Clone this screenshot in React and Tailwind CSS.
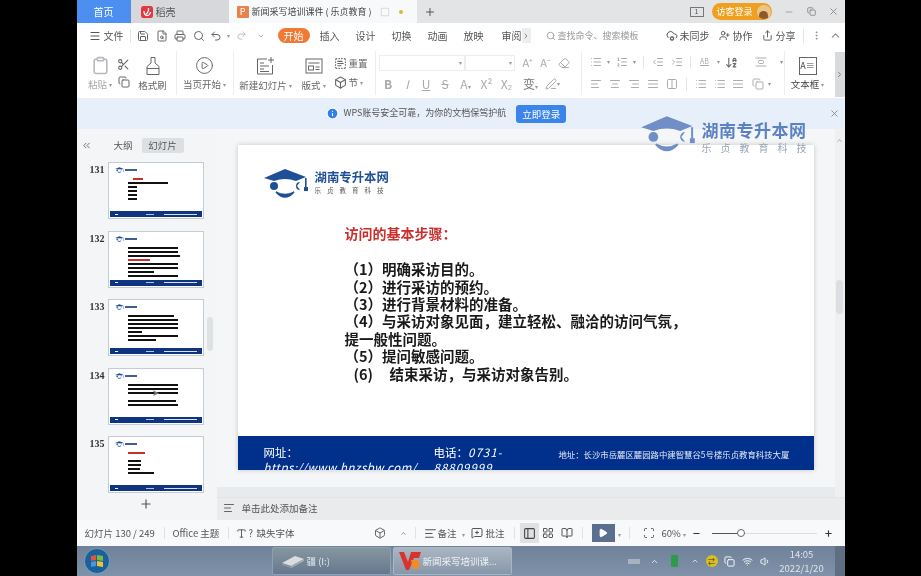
import React from "react";
import {
  Menu, Save, Printer, FileSearch, Undo2, Redo2, ChevronDown, ChevronRight, ChevronUp, Search, CloudCog, UserPlus, Share, MoreVertical, Clipboard, Scissors, Copy, X, Minus, Plus, List, ListOrdered, IndentDecrease, IndentIncrease, AlignLeft, AlignCenter, AlignRight, AlignJustify, Columns2, ArrowDownAZ, ChevronsLeft, Eraser, PenLine, BookOpen, LayoutGrid, PanelLeft, Play, Scan, Box, MessageSquarePlus, Info, Wifi, Volume1, SquareDashed, AlignVerticalSpaceAround, TextSelect, Type, CirclePlay,
} from "lucide-react";

const Caret = ({ c = "text-[#999]" }) => <span className={`inline-block text-[6px] leading-none ${c}`}>▾</span>;

const Logo = ({ fill = "#1f4f96", w = 46 }) => (
  <svg width={w} height={w * 0.72} viewBox="0 0 46 33">
    <path d="M1 10 L22 1 L43 9 L33 13 Q22 9 11 13 Z" fill={fill} />
    <circle cx="11" cy="18" r="4" fill={fill} />
    <path d="M37 14 A4 4 0 1 0 37 22 L34 18 Z" fill={fill} />
    <rect x="42" y="10" width="1.6" height="9" fill={fill} />
    <rect x="41" y="19" width="4" height="4" fill={fill} />
    <path d="M13 24 Q22 34 31 24 Q22 29 13 24 Z" fill={fill} stroke={fill} strokeWidth="1.5" />
  </svg>
);

const BrushIcon = () => (
  <svg width="20" height="20" viewBox="0 0 20 20" fill="none" stroke="#666" strokeWidth="1">
    <path d="M8 1.5 H12 V7 L16 10.5 V18.5 H4 V10.5 L8 7 Z" />
    <path d="M4 12.5 H16" />
  </svg>
);

const NewSlideIcon = () => (
  <svg width="20" height="20" viewBox="0 0 20 20" fill="none" stroke="#666" strokeWidth="1">
    <path d="M11 3 H1.5 V18 H16.5 V9" />
    <path d="M15 1 V7 M12 4 H18" />
    <path d="M4 7 H8 M4 10 H13 M4 13 H8 M4 15.5 H13" />
  </svg>
);

const LayoutIcon = () => (
  <svg width="20" height="20" viewBox="0 0 20 20" fill="none" stroke="#666" strokeWidth="1">
    <rect x="2" y="3" width="16" height="14" />
    <path d="M4.5 7 H15.5" />
    <rect x="4.5" y="10" width="5" height="4" />
    <path d="M11.5 11 H15.5 M11.5 13.5 H15.5" />
  </svg>
);

const SEP = () => <div className="h-[44px] w-px shrink-0 bg-[#eceef0]" />;

const Thumb = ({ n, lines, cursor }) => (
  <div className="flex h-[57px] items-start">
    <div className="w-[31px] pr-[3px] pt-[3px] text-right font-['Liberation_Serif',serif] text-[10px] font-bold leading-none text-[#333]">{n}</div>
    <div className="relative flex h-[57px] w-[96px] flex-col border border-[#c3ccd6] bg-white p-[1px]">
      <div className="flex items-center gap-[1px] pl-[5px] pt-[3px]">
        <Logo w={9} />
        <div className="h-[2px] w-[12px] bg-[#3c5f96]" />
      </div>
      <div className="mt-[5px] flex flex-col gap-[2px] pl-[18px]">
        {lines.map((l, i) => (
          <div key={i} className="h-[2px]" style={{ width: l[0], marginLeft: l[1] || 0, background: l[2] || "#111" }} />
        ))}
      </div>
      {cursor && <div className="absolute left-[43px] top-[19px] text-[9px] leading-none text-[#777]">➤</div>}
      <div className="mt-auto flex h-[6px] items-center gap-[6px] bg-[#0f3480] px-[5px]">
        <div className="h-px w-[4px] bg-white" />
        <div className="ml-[22px] h-px w-[10px] bg-[#b9c6e0]" />
        <div className="ml-[4px] h-px w-[38px] bg-[#d9e0ef]" />
      </div>
    </div>
  </div>
);

const RED = "#c9302c";
const thumbs = [
  [131, [[10, 5, RED], [40], [9, 0], [9, 0], [9, 0], [9, 0]]],
  [132, [[50, 0], [50, 0], [52, 0], [22, 0, RED], [50, 0], [50, 0], [26, 0], [50, 0]]],
  [133, [[46, 0], [50, 0], [50, 0], [50, 0], [14, 0], [50, 0], [28, 0]]],
  [134, [[50, 0], [50, 0], [50, 0], [0, 0], [48, 0], [50, 0]], true],
  [135, [[17, 0, RED], [0], [13, 0], [13, 0], [12, 0], [26, 0]]],
];

const Label = ({ children, className = "" }) => <div className={`flex items-center justify-center gap-[2px] whitespace-nowrap text-[9.5px] leading-none ${className}`}>{children}</div>;

const Cell = ({ w, children }) => <div className={`flex shrink-0 items-center justify-center text-[#a9adb2] ${w}`}>{children}</div>;

export default function App() {
  return (
    <div className="flex h-[576px] w-[921px] justify-center overflow-hidden bg-black font-['Noto_Sans_CJK_SC','Liberation_Sans',sans-serif] blur-[0.3px]">
      <div className="relative flex h-full w-[768px] flex-col">
        {/* tab bar */}
        <div className="flex h-[23px] shrink-0 items-center bg-[#e2e4e6]">
          <div className="flex h-full w-[54px] items-center justify-center bg-[#4d8ff0] text-[10px] text-white">首页</div>
          <div className="flex h-full w-[98px] items-center gap-[3px] bg-[#d6d8db] pl-[10px] text-[10px] text-[#555]">
            <svg width="12" height="12" viewBox="0 0 12 12">
              <rect width="12" height="12" rx="2.5" fill="#e2383f" />
              <path d="M7.5 2 Q8 6 5 8 M3 5 Q3 9.5 6 9.5 Q9 9.5 9.5 6" fill="none" stroke="white" strokeWidth="1.3" />
            </svg>
            稻壳
          </div>
          <div className="flex h-full w-[188px] items-center bg-[#f8f9fa] pl-[8px] text-[#444]">
            <div className="flex h-[12px] w-[12px] items-center justify-center rounded-[1px] bg-[#e8834c] text-[9px] leading-none text-white">P</div>
            <span className="ml-[3px] whitespace-nowrap text-[9px]">新闻采写培训课件 ( 乐贞教育 )</span>
            <SquareDashed size={10} className="ml-[8px] text-[#bbb]" />
            <div className="ml-[9px] h-[4px] w-[4px] rounded-full bg-[#e8b33a]" />
          </div>
          <Plus size={12} className="ml-[7px] text-[#555]" />
          <div className="ml-[254px] flex h-[10px] w-[14px] items-center justify-center border border-[#777] text-[7px] leading-none text-[#555]">1</div>
          <div className="ml-[8px] flex h-[17px] w-[60px] items-center justify-between rounded-full bg-[#f0a020] pl-[5px] pr-[1px] text-[9px] text-white">
            访客登录
            <div className="flex h-[14px] w-[14px] items-end justify-center overflow-hidden rounded-full bg-[#e8c68a]"><div className="h-[8px] w-[9px] rounded-t-full bg-[#8a5a2a]" /></div>
          </div>
          <Minus size={10} className="ml-[12px] text-[#999]" />
          <Copy size={9} className="ml-[13px] text-[#777]" />
          <X size={11} className="ml-[12px] text-[#888]" />
        </div>

        {/* quick bar + menu */}
        <div className="flex h-[25px] shrink-0 items-center whitespace-nowrap bg-white pl-[12px] text-[10px] text-[#555]">
          <Menu size={12} className="shrink-0 text-[#555]" />
          <span className="ml-[3px] w-[22px] shrink-0">文件</span>
          <div className="ml-[4px] h-[14px] w-px bg-[#e5e5e5]" />
          <div className="ml-[3px] flex items-center text-[#666]">
            <Cell w="w-[19px]"><Save size={12} className="text-[#666]" /></Cell>
            <Cell w="w-[18px]"><FileSearch size={12} className="text-[#666]" /></Cell>
            <Cell w="w-[19px]"><Printer size={12} className="text-[#666]" /></Cell>
            <Cell w="w-[18px]"><Search size={12} className="text-[#666]" /></Cell>
            <Cell w="w-[17px]"><Undo2 size={12} className="text-[#666]" /></Cell>
            <Cell w="w-[8px]"><Caret /></Cell>
            <Cell w="w-[18px]"><Redo2 size={11} className="text-[#bbb]" /></Cell>
            <Cell w="w-[20px]"><ChevronDown size={8} className="text-[#888]" /></Cell>
          </div>
          <div className="ml-[7px] flex h-[15px] w-[32px] shrink-0 items-center justify-center rounded-full bg-[#ee7a35] text-white">开始</div>
          <div className="ml-[2px] w-[36px] shrink-0 text-center">插入</div>
          <div className="w-[36px] shrink-0 text-center">设计</div>
          <div className="w-[36px] shrink-0 text-center">切换</div>
          <div className="w-[36px] shrink-0 text-center">动画</div>
          <div className="w-[36px] shrink-0 text-center">放映</div>
          <div className="w-[30px] shrink-0 text-right">审阅</div>
          <div className="flex h-[15px] w-[9px] shrink-0 items-center justify-center bg-[#eceef0]"><ChevronRight size={8} /></div>
          <Search size={10} className="ml-[15px] shrink-0 text-[#999]" />
          <span className="ml-[2px] shrink-0 text-[9px] text-[#999]">查找命令、搜索模板</span>
          <CloudCog size={12} className="ml-[27px] shrink-0" />
          <span className="ml-[2px] shrink-0">未同步</span>
          <UserPlus size={11} className="ml-[9px] shrink-0" />
          <span className="ml-[3px] shrink-0">协作</span>
          <Share size={11} className="ml-[9px] shrink-0" />
          <span className="ml-[3px] shrink-0">分享</span>
          <div className="ml-[7px] h-[14px] w-px shrink-0 bg-[#e5e5e5]" />
          <MoreVertical size={11} className="ml-[7px] shrink-0 text-[#888]" />
          <ChevronUp size={13} className="ml-[7px] shrink-0 text-[#888]" />
        </div>

        {/* ribbon */}
        <div className="relative flex h-[50px] shrink-0 items-center bg-white pl-[10px] text-[#666]">
          <div className="flex w-[27px] flex-col items-center gap-[5px]">
            <Clipboard size={19} className="text-[#b5b8bc]" />
            <Label className="text-[#aaa]">粘贴<Caret /></Label>
          </div>
          <div className="flex w-[20px] flex-col items-center gap-[5px]">
            <Scissors size={13} className="text-[#666]" />
            <Copy size={12} className="text-[#666]" />
          </div>
          <div className="flex w-[38px] flex-col items-center gap-[5px]">
            <BrushIcon />
            <Label>格式刷</Label>
          </div>
          <div className="ml-[4px]"><SEP /></div>
          <div className="flex w-[56px] flex-col items-center gap-[5px]">
            <CirclePlay size={19} strokeWidth={1.25} className="text-[#666]" />
            <Label>当页开始<Caret /></Label>
          </div>
          <SEP />
          <div className="flex w-[64px] flex-col items-center gap-[5px]">
            <NewSlideIcon />
            <Label>新建幻灯片<Caret /></Label>
          </div>
          <div className="flex w-[32px] flex-col items-center gap-[5px]">
            <LayoutIcon />
            <Label>版式<Caret /></Label>
          </div>
          <div className="ml-[4px] flex w-[38px] flex-col gap-[6px]">
            <Label className="justify-start"><TextSelect size={13} className="text-[#666]" />重置</Label>
            <Label className="justify-start"><Box size={13} className="text-[#666]" />节<Caret /></Label>
          </div>
          <div className="ml-[3px]"><SEP /></div>
          <div className="ml-[3px] flex w-[202px] flex-col gap-[5px]">
            <div className="flex h-[16px] items-center">
              <div className="flex h-[16px] w-[86px] items-center justify-end border border-[#eee] pr-[2px]"><Caret /></div>
              <div className="flex h-[16px] w-[50px] items-center justify-end border border-[#eee] pr-[2px]"><Caret /></div>
              <div className="ml-[8px] flex items-center gap-[7px] text-[11px] leading-none text-[#aaa]">
                <span>A⁺</span><span>A⁻</span><Eraser size={12} className="text-[#aaa]" />
              </div>
            </div>
            <div className="flex h-[16px] items-center text-[12px] leading-none text-[#aaa]">
              <span className="w-[19px] text-center font-bold">B</span>
              <span className="w-[19px] text-center italic">I</span>
              <span className="w-[19px] text-center underline">U</span>
              <span className="w-[19px] text-center line-through">S</span>
              <span className="w-[22px] text-center">A<Caret /></span>
              <span className="w-[20px] text-center">X²</span>
              <span className="w-[20px] text-center">X₂</span>
              <span className="w-[28px] text-center text-[#777]">变<Caret /></span>
              <PenLine size={12} className="text-[#aaa]" /><Caret />
            </div>
          </div>
          <div className="flex h-[44px] w-px bg-[#eceef0]" />
          <div className="ml-[4px] flex w-[198px] flex-col gap-[6px]">
            <div className="flex h-[16px] items-center">
              <Cell w="w-[20px]"><List size={12} /></Cell><Cell w="w-[6px]"><Caret /></Cell>
              <Cell w="w-[20px]"><ListOrdered size={12} /></Cell><Cell w="w-[6px]"><Caret /></Cell>
              <div className="mx-[5px] h-[13px] w-px bg-[#e5e5e5]" />
              <Cell w="w-[19px]"><IndentDecrease size={12} /></Cell>
              <Cell w="w-[19px]"><IndentIncrease size={12} /></Cell>
              <div className="mx-[3px] h-[13px] w-px bg-[#e5e5e5]" />
              <Cell w="w-[22px]"><span className="border-b border-[#aaa] text-[7px] leading-none">AB</span></Cell><Cell w="w-[6px]"><Caret /></Cell>
              <Cell w="w-[20px]"><ArrowDownAZ size={13} className="text-[#666]" /></Cell>
              <Cell w="w-[38px]"><AlignVerticalSpaceAround size={12} /></Cell><Caret />
            </div>
            <div className="flex h-[16px] items-center">
              <Cell w="w-[20px]"><AlignLeft size={12} /></Cell>
              <Cell w="w-[19px]"><AlignCenter size={12} /></Cell>
              <Cell w="w-[19px]"><AlignRight size={12} /></Cell>
              <Cell w="w-[19px]"><AlignJustify size={12} /></Cell>
              <Cell w="w-[19px]"><Columns2 size={12} /></Cell>
              <div className="mx-[4px] h-[13px] w-px bg-[#e5e5e5]" />
              <Cell w="w-[20px]"><List size={12} /></Cell>
              <Cell w="w-[18px]"><List size={12} /></Cell>
              <Cell w="w-[19px]"><AlignJustify size={12} /></Cell>
              <Cell w="w-[20px]"><Copy size={12} /></Cell><Caret />
            </div>
          </div>
          <div className="flex h-[44px] w-px bg-[#eceef0]" />
          <div className="flex w-[46px] flex-col items-center gap-[5px]">
            <div className="flex h-[18px] w-[18px] items-center justify-center border border-[#666] text-[9px] leading-none text-[#444]">A≡</div>
            <Label className="text-[#444]">文本框<Caret /></Label>
          </div>
          <div className="absolute right-0 top-[4px] flex h-[45px] w-[10px] items-center justify-center bg-[#d8dadc]"><ChevronRight size={9} /></div>
        </div>

        {/* notice */}
        <div className="relative flex h-[31px] shrink-0 items-start bg-[#e7f0fa] pt-[7px] pl-[249px]">
          <Info size={13} fill="#2f80e8" className="mt-[2px] text-white" />
          <span className="ml-[5px] mt-[1px] whitespace-nowrap text-[9px] leading-[14px] text-[#555]">WPS账号安全可靠，为你的文档保驾护航</span>
          <div className="ml-[10px] flex h-[18px] w-[50px] items-center justify-center rounded-[3px] bg-[#3a84ea] text-[9.5px] text-white">立即登录</div>
          <X size={11} className="absolute right-[5px] top-[10px] text-[#888]" />
        </div>

        {/* work area */}
        <div className="flex min-h-0 flex-1">
          <div className="flex w-[140px] shrink-0 flex-col bg-[#f3f5f6]">
            <div className="flex h-[33px] shrink-0 items-center text-[9.5px] text-[#555]">
              <ChevronsLeft size={11} className="ml-[4px] text-[#666]" />
              <span className="ml-[22px]">大纲</span>
              <div className="ml-[9px] flex h-[15px] w-[42px] items-center justify-center rounded-[2px] bg-[#dde0e3]">幻灯片</div>
            </div>
            <div className="relative flex flex-col gap-[11.5px]">
              {thumbs.map(([n, l, c]) => <Thumb key={n} n={n} lines={l} cursor={c} />)}
              <div className="absolute left-[130px] top-[155px] h-[34px] w-[6px] rounded-full bg-[#dfe2e5]" />
            </div>
            <div className="mt-[4px] flex justify-center pr-[1px]"><Plus size={14} className="text-[#555]" /></div>
          </div>

          <div className="relative flex min-w-0 flex-1 flex-col bg-[#f4f6f7]">
            <div className="flex flex-1 flex-col">
              <div className="ml-[21px] mt-[16px] flex h-[325px] w-[576px] flex-col bg-white shadow-[0_0_5px_rgba(0,0,0,0.2)]">
                <div className="flex items-center gap-[6px] pl-[25px] pt-[23px]">
                  <Logo w={46} />
                  <div className="-mt-[4px]">
                    <div className="whitespace-nowrap text-[12.4px] font-bold leading-[14px] text-[#1f4f96]">湖南专升本网</div>
                    <div className="whitespace-nowrap text-[6.5px] leading-[12px] tracking-[6px] text-[#555]">乐贞教育科技</div>
                  </div>
                </div>
                <div className="ml-[107px] mt-[22px] text-[14px] font-bold leading-[20px] text-[#c9302c]">访问的基本步骤：</div>
                <div className="ml-[107px] mt-[17px] w-[345px] text-[14.5px] font-bold leading-[17.4px] text-[#1a1a1a]">
                  <div>（1）明确采访目的。</div>
                  <div>（2）进行采访的预约。</div>
                  <div>（3）进行背景材料的准备。</div>
                  <div>（4）与采访对象见面，建立轻松、融洽的访问气氛，</div>
                  <div>提一般性问题。</div>
                  <div>（5）提问敏感问题。</div>
                  <div className="pl-[9px]">(6)&nbsp;&nbsp;&nbsp;&nbsp;&nbsp;结束采访，与采访对象告别。</div>
                </div>
                <div className="mt-auto flex h-[34px] shrink-0 overflow-hidden bg-[#00308c] pl-[26px] text-white">
                  <div className="w-[170px] pt-[9px] text-[11.5px] leading-[15px]">
                    <div>网址：</div>
                    <div className="whitespace-nowrap italic tracking-[0.5px]">https://www.hnzsbw.com/</div>
                  </div>
                  <div className="w-[125px] pt-[9px] text-[11.5px] leading-[15px]">
                    <div>电话：<span className="italic tracking-[1px]">0731-</span></div>
                    <div className="italic tracking-[1px]">88809999</div>
                  </div>
                  <div className="whitespace-nowrap pt-[12px] text-[8.4px] leading-[12px] text-[#e6ebf6]">地址：长沙市岳麓区麓园路中建智慧谷5号楼乐贞教育科技大厦</div>
                </div>
              </div>
              <div className="mt-[17px] h-[10px] bg-[#e8ebed]" />
            </div>
            <div className="flex h-[23px] shrink-0 items-center border-t border-[#e2e4e6] bg-[#e9ebec] pb-[2px] pl-[6px] text-[9.5px] text-[#555]">
              <AlignLeft size={12} className="text-[#666]" />
              <span className="ml-[7px]">单击此处添加备注</span>
            </div>
            <div className="absolute bottom-[23px] right-0 top-0 flex w-[10px] flex-col items-center bg-[#eef0f2] pt-[8px]">
              <ChevronUp size={7} className="text-[#777]" />
              <div className="mt-[136px] h-[34px] w-[7px] rounded-full bg-[#dcdfe2]" />
            </div>
          </div>
        </div>

        {/* status bar */}
        <div className="flex h-[26px] shrink-0 items-center bg-[#f8f9fa] pl-[8px] text-[9.5px] text-[#555]">
          <span className="w-[79px] whitespace-nowrap">幻灯片 130 / 249</span>
          <div className="h-[12px] w-px bg-[#e2e2e2]" />
          <span className="ml-[8px] w-[55px] whitespace-nowrap">Office 主题</span>
          <div className="h-[12px] w-px bg-[#e2e2e2]" />
          <Type size={11} className="ml-[7px] text-[#555]" />
          <span className="ml-[2px] w-[8px]">?</span>
          <span className="whitespace-nowrap">缺失字体</span>
          <Box size={12} className="ml-[79px] text-[#666]" />
          <span className="ml-[14px]"><ChevronUp size={7} /></span>
          <div className="ml-[8px] h-[12px] w-px bg-[#e2e2e2]" />
          <AlignLeft size={13} className="ml-[8px] text-[#555]" />
          <span className="ml-px">备注</span>
          <span className="ml-[5px]"><Caret /></span>
          <MessageSquarePlus size={12} className="ml-[6px] text-[#555]" />
          <span className="ml-[3px]">批注</span>
          <div className="ml-[9px] h-[12px] w-px bg-[#e2e2e2]" />
          <div className="ml-[5px] flex h-[20px] w-[19px] items-center justify-center bg-[#dfe1e3]"><PanelLeft size={13} className="text-[#444]" /></div>
          <LayoutGrid size={12} className="ml-[3px] text-[#555]" />
          <BookOpen size={12} className="ml-[7px] text-[#555]" />
          <div className="ml-[9px] h-[12px] w-px bg-[#e2e2e2]" />
          <div className="ml-[9px] flex h-[18px] w-[23px] items-center justify-center bg-[#5c6f8e]"><Play size={10} fill="white" className="text-white" /></div>
          <span className="ml-[3px]"><Caret /></span>
          <div className="ml-[8px] h-[12px] w-px bg-[#e2e2e2]" />
          <Scan size={12} className="ml-[13px] text-[#555]" />
          <span className="ml-[7px]">60%</span>
          <span className="ml-[2px]"><Caret /></span>
          <Minus size={9} strokeWidth={3} className="ml-[6px] text-[#333]" />
          <div className="relative ml-[11px] flex h-[10px] w-[105px] items-center">
            <div className="h-px w-[25px] bg-[#555]" />
            <div className="h-px w-[80px] bg-[#ddd]" />
            <div className="absolute left-[25px] top-[1px] h-[8px] w-[8px] rounded-full border border-[#666] bg-white" />
          </div>
          <Plus size={9} strokeWidth={3} className="ml-[7px] text-[#333]" />
        </div>

        {/* taskbar */}
        <div className="flex h-[30px] shrink-0 items-center bg-[linear-gradient(#6f8299,#7f92aa)] text-[#dfe5ec]">
          <svg width="26" height="26" viewBox="0 0 26 26" className="ml-[7px]">
            <circle cx="13" cy="13" r="12.5" fill="#1b5f9c" stroke="#9cc" strokeWidth="0.5" />
            <path d="M7 8 L12 7 L12 12 L7 13 Z" fill="#e2553a" />
            <path d="M13 7 L19 8 L19 13 L13 12 Z" fill="#7cba3f" />
            <path d="M7 14 L12 13 L12 18 L7 19 Z" fill="#3f9be0" />
            <path d="M13 13 L19 14 L19 19 L13 18 Z" fill="#f2c230" />
          </svg>
          <div className="ml-[162px] flex h-[28px] w-[119px] items-center rounded-[2px] border border-[#8fa0b4] bg-[linear-gradient(#86969f,#66788f)] pl-[8px] text-[9.5px]">
            <svg width="24" height="14" viewBox="0 0 24 14"><path d="M1 9 L14 2 L23 5 L10 12 Z" fill="#d8dde0" /><path d="M1 9 L10 12 L10 14 L1 11 Z" fill="#8d949a" /><path d="M10 12 L23 5 L23 7 L10 14 Z" fill="#a6adb2" /></svg>
            <span className="ml-[2px]">疆 (I:)</span>
          </div>
          <div className="ml-[2px] flex h-[28px] w-[119px] items-center rounded-[2px] border border-[#a9b6c6] bg-[linear-gradient(#aab5c2,#8797ab)] pl-[5px] text-[9.5px]">
            <svg width="22" height="20" viewBox="0 0 22 20"><path d="M0 1 L5 1 L9 11 L12 1 L22 1 L20 7 L15 7 L10 19 L7 19 Z" fill="#d9342b" /><path d="M12 9 L20 9 L20 18 L14 18 Z" fill="#ef8d2a" /></svg>
            <span className="ml-[2px] whitespace-nowrap text-[#eef1f5]">新闻采写培训课...</span>
          </div>
          <div className="ml-[116px] h-[5px] w-[12px] bg-[#a8b3bf]" />
          <ChevronUp size={9} className="ml-[10px] text-white" />
          <div className="ml-[12px] h-[12px] w-[7px] rounded-[1px] bg-[#2f9a48]" />
          <ChevronUp size={8} className="ml-[13px] text-white" />
          <div className="ml-[7px] flex h-[12px] w-[12px] items-center justify-center rounded-full bg-[#d8bf1f] text-[7px] leading-none text-[#333]">⇄</div>
          <Copy size={11} className="ml-[6px] text-white" />
          <Wifi size={11} className="ml-[7px] text-white" />
          <Volume1 size={11} className="ml-[7px] text-white" />
          <div className="ml-[8px] w-[46px] text-center text-[9.5px] leading-[14px]">
            <div>14:05</div>
            <div>2022/1/20</div>
          </div>
          <div className="ml-auto h-full w-[10px] bg-[#5e6f84]" />
        </div>

        {/* watermark */}
        <div className="absolute left-[563px] top-[115px] flex items-center gap-[6px]">
          <Logo fill="#6f8fc6" w={56} />
          <div>
            <div className="pt-[2px] text-[17px] font-bold leading-[24px] tracking-[0.5px] text-[#5a82c4]">湖南专升本网</div>
            <div className="text-[10px] leading-[12px] tracking-[9px] text-[#9aa5b4]">乐贞教育科技</div>
          </div>
        </div>
      </div>
    </div>
  );
}
